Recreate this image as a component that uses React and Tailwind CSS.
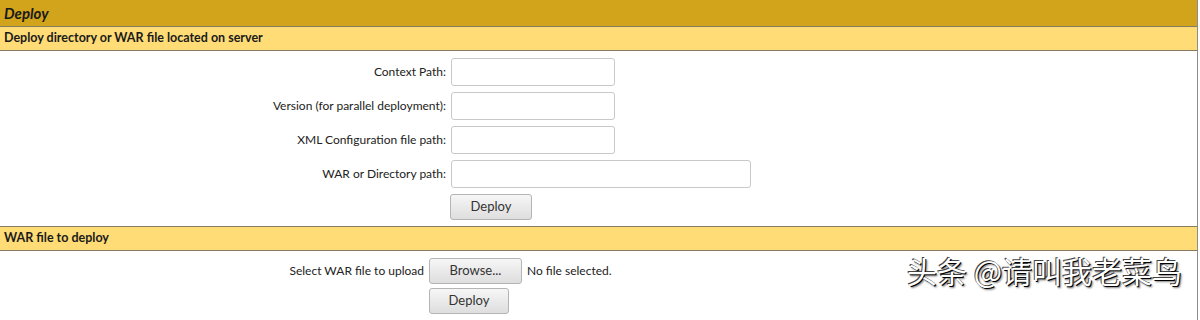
import React from "react";

function TextInput({ w }) {
  return (
    <div className={`h-[28px] ${w} rounded-[3px] border border-[#c9c9c9] bg-white`} />
  );
}

function Btn({ children, w }) {
  return (
    <div
      className={`flex h-[26px] ${w} items-center justify-center rounded-[3px] border border-[#b4b4b4] bg-gradient-to-b from-[#f6f6f6] to-[#dedede] text-[13px] text-[#333]`}
    >
      {children}
    </div>
  );
}

export default function App() {
  const rows = [
    ["Context Path:", "w-[164px]"],
    ["Version (for parallel deployment):", "w-[164px]"],
    ["XML Configuration file path:", "w-[164px]"],
    ["WAR or Directory path:", "w-[300px]"],
  ];
  return (
    <div className="relative h-[320px] w-[1200px] overflow-hidden bg-white font-['Lato','Liberation_Sans',sans-serif] text-[#222]">
      <div className="w-[1198px] border-r border-[#8c8c8c] h-full flex flex-col">
        <div className="flex h-[27px] items-center border-b border-[#857a62] bg-[#D2A41C] pl-[4px] text-[15px] font-bold italic text-[#1a1a1a]">
          Deploy
        </div>
        <div className="flex h-[24px] items-center border-b border-[#857a62] bg-[#FFDC75] pl-[4px] text-[12.5px] font-bold text-[#1a1a1a]">
          Deploy directory or WAR file located on server
        </div>
        <div className="flex flex-col gap-[6px] pt-[7px] pb-[6px]">
          {rows.map(([label, w]) => (
            <div key={label} className="flex items-center gap-[5px]">
              <div className="w-[446px] text-right text-[12px]">{label}</div>
              <TextInput w={w} />
            </div>
          ))}
          <div className="flex items-center pl-[450px]">
            <Btn w="w-[82px]">Deploy</Btn>
          </div>
        </div>
        <div className="flex h-[25px] items-center border-y border-[#857a62] bg-[#FFDC75] pl-[4px] text-[12.5px] font-bold text-[#1a1a1a]">
          WAR file to deploy
        </div>
        <div className="flex flex-col gap-[4px] pt-[7px]">
          <div className="flex items-center">
            <div className="w-[424px] text-right text-[12px]">Select WAR file to upload</div>
            <div className="ml-[5px]">
              <Btn w="w-[93px]">Browse...</Btn>
            </div>
            <div className="ml-[5px] text-[12px]">No file selected.</div>
          </div>
          <div className="pl-[429px]">
            <Btn w="w-[80px]">Deploy</Btn>
          </div>
        </div>
      </div>
      <div className="absolute left-[907px] top-[251px] font-['Noto_Sans_CJK_SC',sans-serif] text-[30px] leading-[38px] text-white [text-shadow:1px_1px_0_#000,-1px_-1px_0_#444,2px_2px_2px_rgba(0,0,0,0.5)]">
        头条 @请叫我老菜鸟
      </div>
    </div>
  );
}
